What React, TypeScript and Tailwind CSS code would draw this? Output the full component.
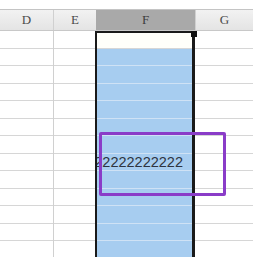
import React from "react";

const ROWS = 13;

export default function App() {
  const rows = Array.from({ length: ROWS }, (_, i) => i);
  return (
    <div
      className="relative w-[253px] h-[257px] overflow-hidden bg-white"
      style={{ fontFamily: '"Liberation Sans", Arial, sans-serif' }}
    >
      <div className="h-[9px] bg-white" />
      {/* header */}
      <div
        className="flex h-[22px] border-t border-b border-t-[#c4c4c4] border-b-[#c8c8c8] text-[13px] text-[#4a4a4a]"
        style={{ fontFamily: '"Liberation Serif", "DejaVu Serif", serif' }}
      >
        <div className="w-[54px] flex items-center justify-center bg-gradient-to-b from-[#f2f2f2] to-[#e4e4e4] border-r border-[#d0d0d0]">
          D
        </div>
        <div className="w-[42px] flex items-center justify-center bg-gradient-to-b from-[#f2f2f2] to-[#e4e4e4]">
          E
        </div>
        <div className="w-[99px] flex items-center justify-center bg-[#a9a9a9] text-[#3c3c3c]">
          F
        </div>
        <div className="flex-1 flex items-center justify-center bg-gradient-to-b from-[#f2f2f2] to-[#e4e4e4] border-l border-[#d0d0d0]">
          G
        </div>
      </div>
      {/* body */}
      <div className="flex">
        <div className="w-[54px] flex flex-col border-r border-[#d0d0d0]">
          {rows.map((i) => (
            <div key={i} className="h-[17.5px] shrink-0 border-b border-[#d6d6d6]" />
          ))}
        </div>
        <div className="w-[41px] flex flex-col">
          {rows.map((i) => (
            <div key={i} className="h-[17.5px] shrink-0 border-b border-[#d6d6d6]" />
          ))}
        </div>
        <div className="w-[100px] flex flex-col border-l-2 border-r-[3px] border-t-2 border-[#1a1a1a] overflow-hidden">
          <div className="h-[15.5px] shrink-0 bg-[#fffffa] border-b border-[#d6d6d6]" />
          {rows.slice(1).map((i) => (
            <div
              key={i}
              className="h-[17.5px] shrink-0 bg-[#a7cdf0] border-b border-[#cfe2f5] flex items-center justify-end pr-[9px] overflow-hidden whitespace-nowrap text-[14.5px] leading-none text-[#2e3440]"
            >
              {i === 7 ? "22222222222" : ""}
            </div>
          ))}
        </div>
        <div className="flex-1 flex flex-col">
          {rows.map((i) => (
            <div key={i} className="h-[17.5px] shrink-0 border-b border-[#d6d6d6]" />
          ))}
        </div>
      </div>
      {/* fill handle */}
      <div className="absolute left-[191px] top-[31px] w-[6px] h-[6px] bg-[#111]" />
      {/* purple highlight */}
      <div className="absolute left-[99px] top-[132px] w-[127px] h-[64px] border-[3.5px] border-[#8a3cc8] rounded-[2px]" />
    </div>
  );
}
